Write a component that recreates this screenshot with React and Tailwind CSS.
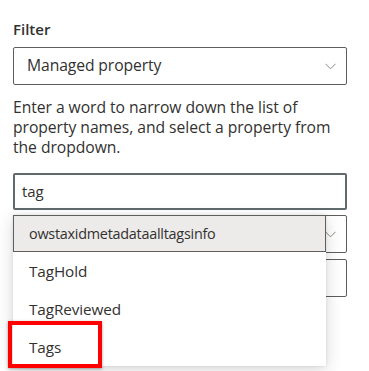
import React from 'react';

const FONT = { fontFamily: '"Open Sans", "Noto Sans", sans-serif' };

function Chevron() {
  return (
    <svg width="11" height="7" viewBox="0 0 11 7" className="shrink-0">
      <polyline points="0.5,0.8 5.5,5.8 10.5,0.8" fill="none" stroke="#8a8886" strokeWidth="1" />
    </svg>
  );
}

const items = ['TagHold', 'TagReviewed', 'Tags'];

export default function App() {
  return (
    <div className="w-[369px] h-[371px] bg-white overflow-hidden text-[#323130]" style={FONT}>
      <div className="px-[13px] pt-[19px] w-[360px]">
        <div className="text-[15px] font-semibold leading-[20px] mb-[8px]">Filter</div>
        <div className="h-[38px] border border-[#605e5c] rounded-[2px] flex items-center justify-between pl-[13px] pr-[10px]">
          <span className="text-[15.7px] tracking-[-0.1px]">Managed property</span>
          <Chevron />
        </div>
        <p className="mt-[12px] text-[15.7px] leading-[20px] tracking-[-0.05px] whitespace-nowrap">
          Enter a word to narrow down the list of
          <br />
          property names, and select a property from
          <br />
          the dropdown.
        </p>
        <div className="mt-[16px] h-[37px] border-2 border-[#606a6c] rounded-[2px] flex items-center pl-[7px] text-[15px] tracking-[-0.1px]">
          tag
        </div>
        <div className="relative mt-[5px]">
          <div className="h-[38px] border border-[#605e5c] rounded-[2px] flex items-center justify-end pr-[10px]">
            <Chevron />
          </div>
          <div className="mt-[6px] h-[38px] border border-[#605e5c] rounded-[2px]" />

          <div className="absolute left-0 top-0 w-[313px] bg-white shadow-[0_4px_16px_rgba(0,0,0,0.16),0_0_3px_rgba(0,0,0,0.1)] text-[15.3px] tracking-[-0.1px]">
            <div className="h-[37px] bg-[#edebe9] border border-[#605e5c] flex items-center pl-[15px] text-[14.4px] tracking-[-0.25px]">
              owstaxidmetadataalltagsinfo
            </div>
            {items.map((t) => (
              <div key={t} className="relative h-[38px] flex items-center pl-[16px]">
                {t}
                {t === 'Tags' && (
                  <div className="absolute left-[-5px] top-[-7px] w-[94px] h-[47px] border-4 border-[#ff0000] shadow-[0_1px_3px_rgba(0,0,0,0.35)]" />
                )}
              </div>
            ))}
          </div>
        </div>
      </div>
    </div>
  );
}
